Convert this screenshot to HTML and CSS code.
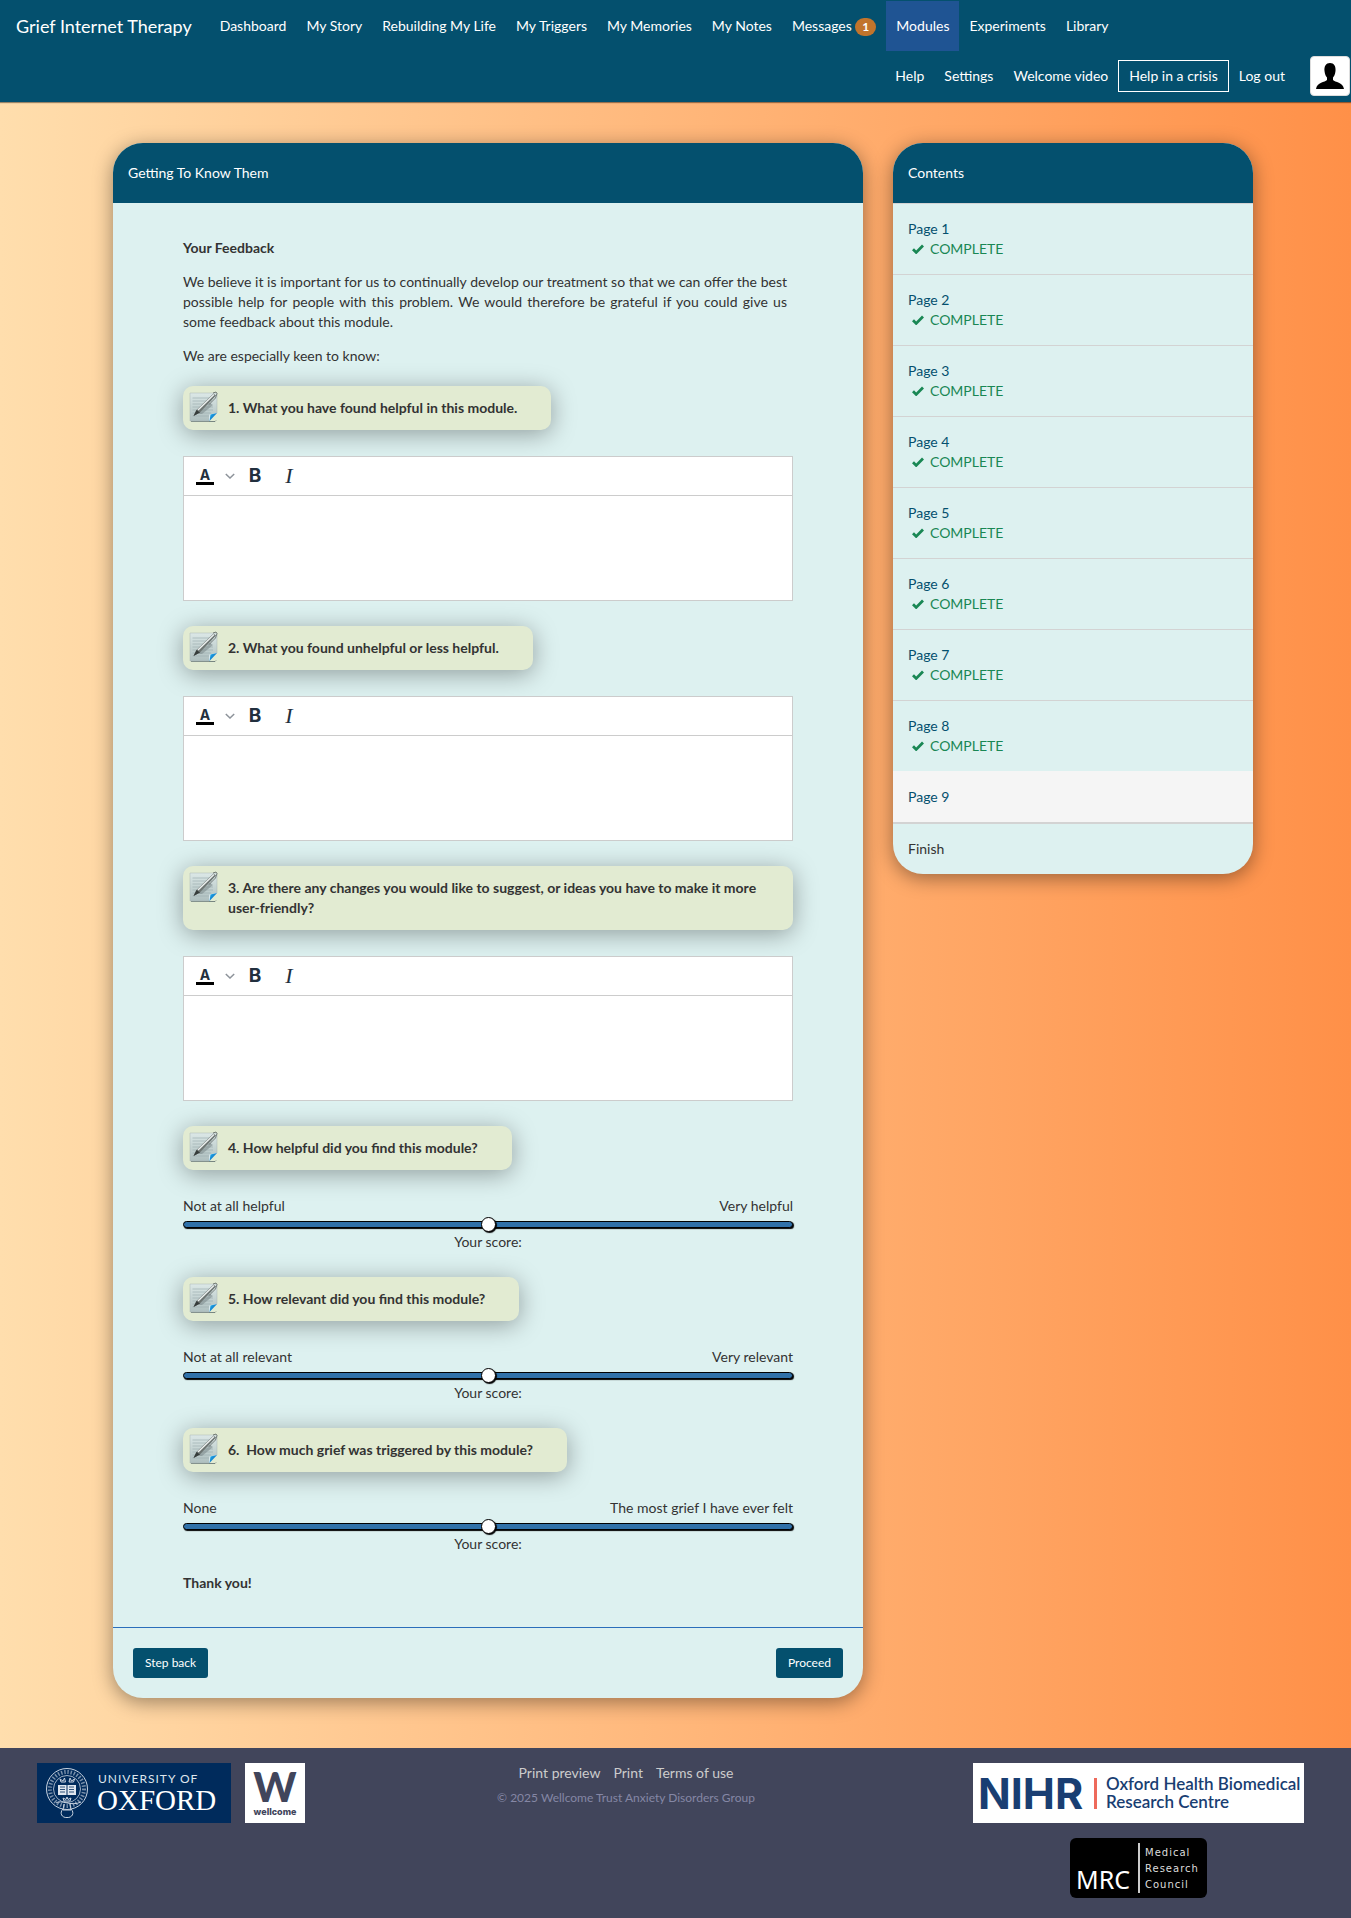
FILE: index.html
```html
<!DOCTYPE html>
<html lang="en">
<head>
<meta charset="utf-8">
<meta name="viewport" content="width=device-width, initial-scale=1">
<title>Getting To Know Them - Grief Internet Therapy</title>
<link rel="stylesheet" href="styles.css">
</head>
<body>
<svg width="0" height="0" class="sprite" aria-hidden="true">
  <defs>
    <linearGradient id="paper" x1="0" y1="0" x2="0" y2="1">
      <stop offset="0" stop-color="#dce8e7"/><stop offset="1" stop-color="#aebfbf"/>
    </linearGradient>
    <linearGradient id="fold" x1="0" y1="0" x2="1" y2="1">
      <stop offset="0" stop-color="#1fb4f4"/><stop offset="1" stop-color="#0a55a8"/>
    </linearGradient>
    <symbol id="note" viewBox="0 0 30 32">
      <path d="M2 30.500H26L27 29.500" stroke="#5e6d6d" stroke-opacity=".8" fill="none"/>
      <path d="M1 2H28V22L20 30H1Z" fill="url(#paper)" stroke="#a9b6b6" stroke-width=".5"/>
      <path d="M3.500 7H24M3.500 10H23M3.500 13H22M3.500 16H24M3.500 19H24M3.500 22H22M3.500 25H20" stroke="#9db0b1" stroke-width=".7"/>
      <path d="M9 23L21 12L24 14L13 23Z" fill="#7f8c8d" opacity=".6"/>
      <path d="M28 22L20 30L20.500 23.500Z" fill="#e9f6fb"/>
      <path d="M28 22L20.500 30L21.500 23.500Z" fill="url(#fold)"/>
      <path d="M4.500 25L7.500 19L24.500 2.500L27 4.500L11 21.500Z" fill="#6d7573"/>
      <path d="M9 19L25 3.500" stroke="#eef2f1" stroke-width="1.400"/>
      <path d="M4.500 25L7.500 19L11 21.500Z" fill="#363c3b"/>
      <path d="M24 2L27 1L28 2.500L26.500 7L20 13.500" fill="none" stroke="#5b6260" stroke-width=".8"/>
    </symbol>
    <symbol id="check" viewBox="0 0 12 10">
      <path d="M1 5.200L4.200 8.400L11 1.600" fill="none" stroke="#198754" stroke-width="2.800"/>
    </symbol>
    <symbol id="chevron" viewBox="0 0 10 6">
      <path d="M.8 1L5 5L9.200 1" fill="none" stroke="#8d939a" stroke-width="1.500"/>
    </symbol>
  </defs>
</svg>

<header class="navbar">
  <nav class="nav-row">
    <a class="brand" href="#">Grief Internet Therapy</a>
    <a href="#">Dashboard</a>
    <a href="#">My Story</a>
    <a href="#">Rebuilding My Life</a>
    <a href="#">My Triggers</a>
    <a href="#">My Memories</a>
    <a href="#">My Notes</a>
    <a href="#">Messages <span class="badge">1</span></a>
    <a class="active" href="#">Modules</a>
    <a href="#">Experiments</a>
    <a href="#">Library</a>
  </nav>
  <nav class="nav-row nav-right">
    <a href="#">Help</a>
    <a href="#">Settings</a>
    <a href="#">Welcome video</a>
    <a class="crisis" href="#">Help in a crisis</a>
    <a href="#">Log out</a>
    <a class="avatar" href="#" aria-label="Profile">
      <svg viewBox="0 0 38 38" width="38" height="38" aria-hidden="true">
        <path d="M19 6C23 6 25 9 24.500 14C24.200 17.500 23 19.500 22 20.500V23C24 25.500 32 25 33 32H5C6 25 14 25.500 16 23V20.500C15 19.500 13.800 17.500 13.500 14C13 9 15 6 19 6Z"/>
      </svg>
    </a>
  </nav>
</header>

<main class="page">
  <section class="panel">
    <h1 class="panel-head">Getting To Know Them</h1>
    <form class="panel-body">
      <p><strong>Your Feedback</strong></p>
      <p class="intro">We believe it is important for us to continually develop our treatment so that we can offer the best possible help for people with this problem. We would therefore be grateful if you could give us some feedback about this module.</p>
      <p>We are especially keen to know:</p>

      <div class="question">
        <label class="note" for="q1"><svg class="note-icon" aria-hidden="true"><use href="#note"/></svg>1. What you have found helpful in this module.</label>
        <div class="editor">
          <div class="toolbar">
            <button type="button" class="tool colour" aria-label="Text colour"><span>A</span></button>
            <button type="button" class="tool more" aria-label="More colours"><svg width="10" height="6"><use href="#chevron"/></svg></button>
            <button type="button" class="tool bold" aria-label="Bold">B</button>
            <button type="button" class="tool italic" aria-label="Italic">I</button>
          </div>
          <textarea id="q1"></textarea>
        </div>
      </div>

      <div class="question">
        <label class="note" for="q2"><svg class="note-icon" aria-hidden="true"><use href="#note"/></svg>2. What you found unhelpful or less helpful.</label>
        <div class="editor">
          <div class="toolbar">
            <button type="button" class="tool colour" aria-label="Text colour"><span>A</span></button>
            <button type="button" class="tool more" aria-label="More colours"><svg width="10" height="6"><use href="#chevron"/></svg></button>
            <button type="button" class="tool bold" aria-label="Bold">B</button>
            <button type="button" class="tool italic" aria-label="Italic">I</button>
          </div>
          <textarea id="q2"></textarea>
        </div>
      </div>

      <div class="question">
        <label class="note" for="q3"><svg class="note-icon" aria-hidden="true"><use href="#note"/></svg>3. Are there any changes you would like to suggest, or ideas you have to make it more user-friendly?</label>
        <div class="editor">
          <div class="toolbar">
            <button type="button" class="tool colour" aria-label="Text colour"><span>A</span></button>
            <button type="button" class="tool more" aria-label="More colours"><svg width="10" height="6"><use href="#chevron"/></svg></button>
            <button type="button" class="tool bold" aria-label="Bold">B</button>
            <button type="button" class="tool italic" aria-label="Italic">I</button>
          </div>
          <textarea id="q3"></textarea>
        </div>
      </div>

      <div class="question">
        <label class="note" for="q4"><svg class="note-icon" aria-hidden="true"><use href="#note"/></svg>4. How helpful did you find this module?</label>
        <div class="scale">
          <div class="ends"><span>Not at all helpful</span><span>Very helpful</span></div>
          <input type="range" id="q4" min="0" max="100" value="50">
          <output for="q4">Your score:</output>
        </div>
      </div>

      <div class="question">
        <label class="note" for="q5"><svg class="note-icon" aria-hidden="true"><use href="#note"/></svg>5. How relevant did you find this module?</label>
        <div class="scale">
          <div class="ends"><span>Not at all relevant</span><span>Very relevant</span></div>
          <input type="range" id="q5" min="0" max="100" value="50">
          <output for="q5">Your score:</output>
        </div>
      </div>

      <div class="question">
        <label class="note" for="q6"><svg class="note-icon" aria-hidden="true"><use href="#note"/></svg>6.&nbsp; How much grief was triggered by this module?</label>
        <div class="scale">
          <div class="ends"><span>None</span><span>The most grief I have ever felt</span></div>
          <input type="range" id="q6" min="0" max="100" value="50">
          <output for="q6">Your score:</output>
        </div>
      </div>

      <p class="thanks"><strong>Thank you!</strong></p>
    </form>
    <div class="panel-foot">
      <button type="button" class="btn">Step back</button>
      <button type="button" class="btn">Proceed</button>
    </div>
  </section>

  <aside class="panel">
    <h2 class="panel-head">Contents</h2>
    <ul class="contents">
      <li><a href="#">Page 1</a><span class="done"><svg width="12" height="10"><use href="#check"/></svg>COMPLETE</span></li>
      <li><a href="#">Page 2</a><span class="done"><svg width="12" height="10"><use href="#check"/></svg>COMPLETE</span></li>
      <li><a href="#">Page 3</a><span class="done"><svg width="12" height="10"><use href="#check"/></svg>COMPLETE</span></li>
      <li><a href="#">Page 4</a><span class="done"><svg width="12" height="10"><use href="#check"/></svg>COMPLETE</span></li>
      <li><a href="#">Page 5</a><span class="done"><svg width="12" height="10"><use href="#check"/></svg>COMPLETE</span></li>
      <li><a href="#">Page 6</a><span class="done"><svg width="12" height="10"><use href="#check"/></svg>COMPLETE</span></li>
      <li><a href="#">Page 7</a><span class="done"><svg width="12" height="10"><use href="#check"/></svg>COMPLETE</span></li>
      <li><a href="#">Page 8</a><span class="done"><svg width="12" height="10"><use href="#check"/></svg>COMPLETE</span></li>
      <li class="current"><a href="#">Page 9</a></li>
      <li>Finish</li>
    </ul>
  </aside>
</main>

<footer class="footer">
  <div class="partners">
    <svg width="194" height="60" viewBox="0 0 194 60" role="img" aria-label="University of Oxford">
      <rect width="194" height="60" fill="#002b5c"/>
      <g fill="none" stroke="#c9d3e0">
        <circle cx="30" cy="26" r="20.500" stroke-width="1"/>
        <circle cx="30" cy="26" r="17" stroke-width="4" stroke-dasharray="1.400 1.800" stroke-opacity=".6"/>
        <circle cx="30" cy="26" r="13.500" stroke-width=".8"/>
        <path d="M19 40C24 36 34 44 44 39M26 46C22 50 25 55 30 54.500C35 55 38 50 34 46M27 41L26 47H34L33 41" stroke-width="1"/>
        <path d="M24 19L23 16L26 18L27.500 15L28.500 19ZM32 19L33 15L34.500 18L37.500 16L36.500 19ZM27 38L26 35L29 36.500L30 34L31 36.500L34 35L33 38Z" stroke-width="1"/>
      </g>
      <path d="M21 22H29.500V32H21ZM30.500 22H39V32H30.500Z" fill="#dfe6ee"/>
      <path d="M23 24H28M23 26.500H28M23 29H28M32 24H37M32 26.500H37M32 29H37" stroke="#002b5c" stroke-width=".8"/>
      <text class="oxford-small" x="61" y="20">UNIVERSITY OF</text>
      <text class="oxford-large" x="60" y="47">OXFORD</text>
    </svg>
    <svg width="60" height="60" viewBox="0 0 60 60" role="img" aria-label="Wellcome">
      <rect width="60" height="60" fill="#fff"/>
      <text class="wellcome-w" x="30" y="39">W</text>
      <text class="wellcome-name" x="30" y="52">wellcome</text>
    </svg>
  </div>
  <div class="legal">
    <div class="links"><a href="#">Print preview</a><a href="#">Print</a><a href="#">Terms of use</a></div>
    <small>© 2025 Wellcome Trust Anxiety Disorders Group</small>
  </div>
  <div class="funders">
    <svg width="331" height="60" viewBox="0 0 331 60" role="img" aria-label="NIHR Oxford Health Biomedical Research Centre">
      <rect width="331" height="60" fill="#fff"/>
      <text class="nihr" x="5" y="46">NIHR</text>
      <rect x="121" y="15" width="3" height="31" fill="#ee6a5b"/>
      <text class="brc" x="133" y="27">Oxford Health Biomedical</text>
      <text class="brc" x="133" y="45">Research Centre</text>
    </svg>
    <svg width="137" height="60" viewBox="0 0 137 60" role="img" aria-label="MRC Medical Research Council">
      <rect width="137" height="60" rx="6"/>
      <text class="mrc" x="6" y="51">MRC</text>
      <rect x="68" y="5" width="2" height="50" fill="#ccc"/>
      <text class="mrc-line" x="75" y="18">Medical</text>
      <text class="mrc-line" x="75" y="34">Research</text>
      <text class="mrc-line" x="75" y="50">Council</text>
    </svg>
  </div>
</footer>
</body>
</html>
```

FILE: styles.css
```css
* { box-sizing: border-box; }

body {
  margin: 0;
  font: 14px/20px Lato, "Noto Sans", sans-serif;
  color: #333;
  background: linear-gradient(to right, #ffdead, #ff9048);
}

a { color: #04506e; text-decoration: none; }
.sprite { display: block; }

/* Navigation */
.navbar {
  background: #04506e;
  border-top: 1px solid #04506e;
  border-bottom: 1px solid #04506e;
  box-shadow: 0 1px 1px rgba(0, 0, 0, .4);
}
.nav-row { display: flex; flex-wrap: wrap; align-items: center; }
.nav-row a { color: #fff; padding: 15px 10px; white-space: nowrap; }
.nav-row .brand { font-size: 18px; padding: 15px 18px 15px 16px; }
.nav-row .active { background: #1f5493; }
.badge {
  display: inline-block;
  background: #c1742c;
  border-radius: 10px;
  padding: 3px 7px;
  font-size: 12px;
  line-height: 12px;
  font-weight: bold;
}
.nav-right { justify-content: flex-end; padding-right: 1px; }
.nav-right .crisis { border: 1px solid #fff; padding: 5px 10px; }
.nav-right .avatar {
  width: 40px;
  height: 40px;
  margin-left: 15px;
  padding: 0;
  background: #fff;
  border: 1px solid #ddd;
  border-radius: 4px;
}
.avatar svg { display: block; }

/* Page grid */
.page {
  display: grid;
  grid-template-columns: minmax(0, 750fr) minmax(0, 360fr);
  gap: 30px;
  align-items: start;
  max-width: 1155px;
  margin: 0 auto;
  padding: 41px 0 50px 15px;
}
.panel {
  background: #ddf1f0;
  border-radius: 30px;
  overflow: hidden;
  box-shadow: 0 4px 20px rgba(0, 0, 0, .4);
}
.panel-head {
  margin: 0;
  padding: 20px 15px;
  font-size: 14px;
  font-weight: normal;
  color: #fff;
  background: #04506e;
}
.panel-body { padding: 35px 70px 34px; }
.panel-body p { margin: 0 0 14px; }
.panel-body .intro { text-align: justify; margin-right: 6px; }
.panel-body .thanks { margin: 0; }
.panel-foot {
  display: flex;
  justify-content: space-between;
  padding: 20px;
  border-top: 1px solid #2a6ebb;
}
.btn {
  height: 30px;
  padding: 5px 12px;
  border: 0;
  border-radius: 3px;
  background: #04506e;
  color: #fff;
  font: 12px/18px Lato, sans-serif;
}

/* Questions */
.question { padding: 6px 0 19px; }
.note {
  display: block;
  position: relative;
  width: fit-content;
  padding: 12px 34px 12px 45px;
  margin-bottom: 26px;
  border-radius: 10px;
  background: #e2ebd2;
  font-weight: bold;
  box-shadow: 0 4px 25px rgba(0, 0, 0, .35);
}
.note-icon {
  position: absolute;
  left: 6px;
  top: 5px;
  width: 30px;
  height: 32px;
}

.editor { position: relative; background: #fff; border: 1px solid #ccc; }
.toolbar {
  display: flex;
  height: 39px;
  padding-left: 4px;
  border-bottom: 1px solid #ccc;
}
.tool {
  display: flex;
  align-items: center;
  justify-content: center;
  width: 34px;
  padding: 0;
  border: 0;
  background: none;
  color: #222f3e;
}
.tool.more { width: 16px; }
.tool.bold { font: bold 19px/24px Inter, sans-serif; }
.tool.italic { font: italic 22px/24px "Liberation Serif", serif; }
.tool.colour { font: bold 14px/14px Inter, sans-serif; }
.tool.colour span { width: 18px; border-bottom: 3px solid #000; }
.editor textarea {
  display: block;
  width: 100%;
  height: 104px;
  padding: 8px;
  border: 0;
  outline: 0;
  resize: none;
  font: inherit;
  background: #fff;
}

.scale { display: flex; flex-direction: column; }
.ends { display: flex; justify-content: space-between; }
.scale output { text-align: center; }
.scale input {
  appearance: none;
  width: 100%;
  height: 16px;
  margin: 0;
  background: none;
}
.scale input::-webkit-slider-runnable-track {
  height: 7px;
  border: 1px solid #010101;
  border-radius: 4px;
  background: #3071a9;
  box-shadow: 1px 1px 1px #000;
}
.scale input::-webkit-slider-thumb {
  appearance: none;
  width: 15px;
  height: 15px;
  margin-top: -5px;
  border: 1px solid #000;
  border-radius: 50%;
  background: #fff;
  box-shadow: 1px 1px 1px #000;
}

/* Contents list */
.contents { list-style: none; margin: 0; padding: 0; }
.contents li { padding: 15px; border-top: 1px solid #d3d3d3; }
.contents a { display: block; }
.contents .current {
  background: #f5f5f5;
  border-top-color: #f5f5f5;
  border-bottom: 1px solid #d3d3d3;
}
.done {
  display: flex;
  align-items: center;
  gap: 6px;
  padding-left: 4px;
  color: #198754;
}

/* Footer */
.footer {
  display: grid;
  grid-template-columns: 326fr 600fr 425fr;
  padding: 15px 0 20px;
  background: #41455b;
}
.footer svg { display: block; }
.partners { display: flex; gap: 14px; padding-left: 37px; }
.legal { text-align: center; color: #8587a5; }
.links { display: flex; justify-content: center; gap: 13px; margin-bottom: 5px; }
.links a { color: #ccc; }
.legal small { display: block; font-size: 12px; }
.funders { display: flex; flex-direction: column; align-items: center; gap: 15px; }

.oxford-small { font: 12px Lato, sans-serif; letter-spacing: 1px; fill: #dfe6ee; }
.oxford-large { font: 29px "Liberation Serif", serif; fill: #fff; }
.wellcome-w { font: 900 41px Lato, sans-serif; fill: #41455b; text-anchor: middle; }
.wellcome-name { font: 800 9px Inter, sans-serif; fill: #41455b; text-anchor: middle; }
.nihr { font: bold 43px Inter, sans-serif; fill: #193e72; }
.brc { font: 600 17px Lato, sans-serif; fill: #193e72; }
.mrc { font: 25px "Noto Sans", sans-serif; fill: #fff; }
.mrc-line { font: 10px "DejaVu Sans", sans-serif; letter-spacing: 1px; fill: #ddd; }

@media (max-width: 900px) {
  .page { grid-template-columns: minmax(0, 1fr); padding: 20px 15px; }
  .panel-body { padding: 30px 20px; }
  .footer { grid-template-columns: 1fr; gap: 20px; justify-items: center; }
}
```
